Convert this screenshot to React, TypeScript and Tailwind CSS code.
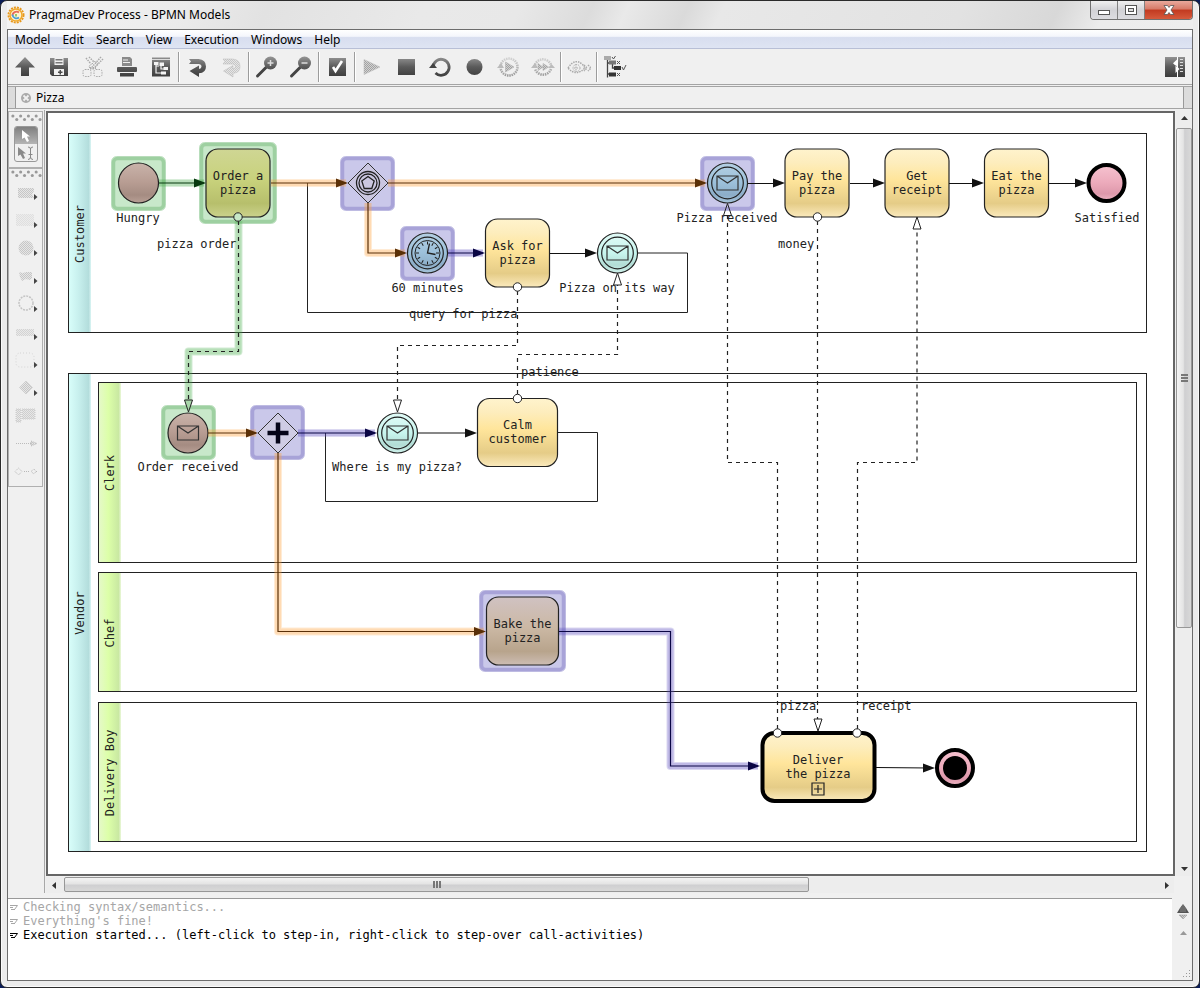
import React from "react";

const UI = "font-['Noto_Sans','Open_Sans',sans-serif]";
const MONO = "font-['DejaVu_Sans_Mono',monospace]";

/* ---------- toolbar ---------- */

const G = "url(#iconDark)";
const L = "url(#iconLight)";

const icons: Record<string, React.ReactNode> = {
  "Go up": <path fill={G} d="M12 2 22 12.500H16V21H8V12.500H2Z" />,
  Save: (
    <g>
      <path fill={G} d="M3 3H21V21H5L3 19Z" />
      <path fill="#f0f0f0" d="M7.500 3H16.500V10H7.500Z" />
      <path fill="#777" d="M8.500 4H15.500V5.500H8.500ZM8.500 7H15.500V8.500H8.500Z" />
      <path fill="#f0f0f0" d="M7 14H17V20H7Z" />
      <path fill={G} d="M12.500 15H14V16.500H15.500V18H14V19.500H12.500V18H11V16.500H12.500Z" />
    </g>
  ),
  Cut: (
    <g fill="none" stroke="#aaa" strokeDasharray="1.500 1">
      <path d="M5 3 10 9M8 2 13 7M20 2 11 12M22 4 14 12" strokeWidth="1.500" />
      <path d="M11 9 14 6 17 9 13 14H9L8 11Z" />
      <rect x="2" y="14.500" width="8" height="7" rx="2" />
      <rect x="13" y="14.500" width="8" height="7" rx="2" />
      <path d="M9 13H15" strokeWidth="2" />
    </g>
  ),
  Print: (
    <g fill={G}>
      <path d="M7 2H15L17 4V11H7Z" fill="#8a8a8a" />
      <path d="M8 5H13M8 7.500H15" stroke="#f0f0f0" strokeWidth="1" />
      <rect x="2" y="12" width="20" height="5" rx="1" />
      <rect x="5" y="18" width="14" height="3.500" />
    </g>
  ),
  Outline: (
    <g>
      <rect x="3" y="2.500" width="18" height="19" fill={G} />
      <path d="M3 4.500H21" stroke="#ddd" />
      <path d="M7 8V18H14M7 11H10M12 9V14H15" stroke="#f4f4f4" strokeWidth="1.200" fill="none" />
      <path fill="#f4f4f4" d="M5 7H9.500V10H5ZM10.500 7.500H15V11H10.500ZM14.500 12H19V15H14.500ZM12 16.500H17V19.500H12Z" />
    </g>
  ),
  Undo: (
    <path
      fill={G}
      d="M4 4H13.500Q21 4.500 21 11.500Q21 18 14 18.300V22L4.500 16 14 10.500V14Q16.500 13.800 16.500 11.500Q16.500 9 13.500 9H4L6 6.500Z"
    />
  ),
  Redo: (
    <path
      fill="url(#dots)"
      stroke="#bbb"
      strokeWidth=".5"
      d="M4 4H13.500Q21 4.500 21 11.500Q21 18 14 18.300V22L4.500 16 14 10.500V14Q16.500 13.800 16.500 11.500Q16.500 9 13.500 9H4L6 6.500Z"
    />
  ),
  "Zoom in": (
    <g>
      <path d="M2.500 21 11 12.500" stroke="#444" strokeWidth="3" strokeLinecap="round" />
      <circle cx="15.500" cy="8" r="6.500" fill={G} />
      <path d="M12.500 8H18.500M15.500 5V11" stroke="#ddd" strokeWidth="1.500" />
    </g>
  ),
  "Zoom out": (
    <g>
      <path d="M2.500 21 11 12.500" stroke="#444" strokeWidth="3" strokeLinecap="round" />
      <circle cx="15.500" cy="8" r="6.500" fill={G} />
      <path d="M12.500 8H18.500" stroke="#ddd" strokeWidth="1.500" />
    </g>
  ),
  Check: (
    <g>
      <rect x="4" y="3" width="17" height="18" fill={G} />
      <path d="M8 12 10.500 16 17 6" stroke="#fff" strokeWidth="2.600" fill="none" />
    </g>
  ),
  Run: <path d="M3 4.500 19 12 3 19.500Z" fill="url(#dotsDark)" stroke="#bbb" strokeWidth=".5" />,
  Stop: <rect x="3" y="4" width="17" height="16" fill={G} />,
  Restart: (
    <g>
      <path d="M4.600 12A8 8 0 1 1 7 18" stroke={G} strokeWidth="2.800" fill="none" transform="translate(-.5 0)" />
      <path d="M0 13 4 8 8 13Z" fill="#444" />
    </g>
  ),
  Record: <circle cx="11.500" cy="12" r="8" fill={G} />,
  "Step in": (
    <g>
      <circle cx="12" cy="12" r="8.500" fill="none" stroke={L} strokeWidth="2.500" strokeDasharray="1.500 .8" />
      <path d="M8.500 7 17 12 8.500 17Z" fill="url(#dotsDark)" stroke="#aaa" strokeWidth=".5" />
      <path d="M0 13 4 8 7 13Z" fill="#bbb" />
    </g>
  ),
  "Step over": (
    <g>
      <path d="M3.500 12A8.500 8.500 0 0 1 20 10M20 14A8.500 8.500 0 0 1 4 14" fill="none" stroke={L} strokeWidth="2.500" strokeDasharray="1.500 .8" />
      <path d="M7 8.500 12 12 7 15.500ZM12 8.500 17.500 12 12 15.500Z" fill="url(#dotsDark)" stroke="#aaa" strokeWidth=".5" />
      <path d="M0 13 4 8 7 13ZM17 13H24L20.500 9Z" fill="#bbb" />
    </g>
  ),
  Watch: (
    <g fill="none" stroke="#aaa" strokeDasharray="1.500 1">
      <path d="M1 13Q8 2 16 10L18 13Q9 22 1 13Z" strokeWidth="1.500" />
      <circle cx="9.500" cy="13" r="3.500" />
      <path d="M9 9V17M7 13H12" />
      <path d="M17 10 20 13 17 16M21 10 24 13 21 16" strokeWidth="1.500" />
    </g>
  ),
  Coverage: (
    <g>
      <path d="M4.500 5V22.500M5 8H8M9.500 9V13H12M5 19H7" stroke="#444" strokeWidth="1.300" fill="none" />
      <path fill="#aaa" d="M1 1H8V5H1Z" />
      <path fill="#777" d="M6 5.500H13V9.500H6Z" />
      <path fill="#333" d="M11 11H18V15H11ZM6 17.500H13V21.500H6Z" />
      <path d="M9 2 10.500 4 12.500 1M14 6 17 9M17 6 14 9M19 12 20.500 15 23 10M14 18 17 21M17 18 14 21" stroke="#555" fill="none" />
    </g>
  ),
  Panel: (
    <g>
      <rect x="2" y="2" width="20" height="20" fill={G} />
      <path d="M14.500 2V22" stroke="#fff" />
      <path d="M14 4.500V12L10 8.300ZM12.500 10V18L16.500 14Z" fill="#fff" />
      <path d="M17 4.500H20M17 7.500H20M17 10.500H20M17 13.500H20M17 16.500H20" stroke="#ddd" />
    </g>
  ),
};

function ToolButton({ name }: { name: string }) {
  return (
    <button type="button" aria-label={name} className="flex h-[34px] w-[34px] items-center justify-center">
      <svg viewBox="0 0 24 24" className="h-6 w-6">
        {icons[name]}
      </svg>
    </button>
  );
}

const toolGroups = [
  ["Go up", "Save", "Cut", "Print", "Outline"],
  ["Undo", "Redo"],
  ["Zoom in", "Zoom out"],
  ["Check"],
  ["Run", "Stop", "Restart", "Record", "Step in", "Step over"],
  ["Watch"],
  ["Coverage"],
];

function SharedDefs() {
  return (
    <svg className="absolute h-0 w-0" aria-hidden="true">
      <defs>
        <linearGradient id="iconDark" gradientUnits="userSpaceOnUse" x1="0" y1="2" x2="0" y2="22">
          <stop offset="0" stopColor="#929292" />
          <stop offset=".5" stopColor="#5a5a5a" />
          <stop offset="1" stopColor="#3c3c3c" />
        </linearGradient>
        <linearGradient id="iconLight" gradientUnits="userSpaceOnUse" x1="0" y1="2" x2="0" y2="22">
          <stop offset="0" stopColor="#d4d4d4" />
          <stop offset="1" stopColor="#999" />
        </linearGradient>
        <pattern id="dots" width="2" height="2" patternUnits="userSpaceOnUse">
          <rect width="2" height="2" fill="#e6e6e6" />
          <rect width="1" height="1" fill="#c6c6c6" />
          <rect x="1" y="1" width="1" height="1" fill="#c6c6c6" />
        </pattern>
        <pattern id="dotsDark" width="2" height="2" patternUnits="userSpaceOnUse">
          <rect width="2" height="2" fill="#d2d2d2" />
          <rect width="1" height="1" fill="#a2a2a2" />
          <rect x="1" y="1" width="1" height="1" fill="#a2a2a2" />
        </pattern>
      </defs>
    </svg>
  );
}

/* ---------- palette ---------- */

const paletteItems: { name: string; arrow: boolean; art: React.ReactNode }[] = [
  { name: "Pool", arrow: true, art: <path d="M4 8H20V11L18 14 20 18H4Z" fill="url(#dots)" /> },
  { name: "Lane", arrow: true, art: <path d="M2 6H20V18H2Z" fill="url(#dots)" opacity=".4" /> },
  { name: "Start event", arrow: true, art: <circle cx="12" cy="12" r="7.500" fill="url(#dots)" /> },
  { name: "Intermediate event", arrow: true, art: <path d="M5 8 9 9 12 8 18 8V14L16 16 12 15 8 17 6 13Z" fill="url(#dots)" /> },
  { name: "End event", arrow: true, art: <circle cx="12" cy="11" r="7" fill="none" stroke="#c4c4c4" strokeWidth="1.500" strokeDasharray="2 1" /> },
  { name: "Activity", arrow: true, art: <path d="M2 9H20V16H2Z" fill="url(#dots)" opacity=".7" /> },
  { name: "Sub-process", arrow: true, art: <rect x="2" y="5" width="18" height="14" rx="4" fill="none" stroke="#d4d4d4" strokeDasharray="1 2" /> },
  { name: "Gateway", arrow: true, art: <path d="M12 5 18.500 11.500 12 18 5.500 11.500Z" fill="url(#dots)" stroke="#c0c0c0" strokeWidth=".5" /> },
  { name: "Annotation", arrow: false, art: <path d="M2 5H7V18H2ZM8 5H21V15H8Z" fill="url(#dots)" opacity=".8" stroke="#c4c4c4" strokeDasharray="1 1" /> },
  { name: "Sequence flow", arrow: false, art: <path d="M2 11.500H18M17 9 23 11.500 17 14Z" stroke="#bbb" strokeDasharray="1 1" fill="url(#dots)" /> },
  {
    name: "Message flow",
    arrow: false,
    art: <path d="M1 11.500 4.500 8 8 11.500 4.500 15ZM10 11.500H16M17 11.500 20 9 22 11.500 20 14ZM22 11.500H24" stroke="#b8b8b8" strokeDasharray="1 1" fill="none" />,
  },
];

function Grip() {
  return (
    <svg className="h-[9px] w-full" viewBox="0 0 34 9" aria-hidden="true">
      {[0, 1, 2, 3].map((i) => (
        <g key={i} fill="#999">
          <circle cx={4 + i * 8} cy="3" r="1.600" />
          <circle cx={8 + i * 8} cy="6.500" r="1.600" />
        </g>
      ))}
    </svg>
  );
}

function Palette() {
  return (
    <aside className="flex w-[37px] shrink-0 flex-col border-r border-[#a8a8a8] pr-px pt-px">
      <div className="h-[57px] border border-[#b0b0b0] pt-px">
        <Grip />
        <div className="mx-auto mt-1 flex w-6 flex-col overflow-hidden rounded-[3px] border border-[#999]">
          <button type="button" aria-label="Select" className="flex h-[17px] items-center justify-center bg-linear-to-b from-[#808080] to-[#b5b5b5]">
            <svg viewBox="0 0 12 14" className="h-[14px] w-3">
              <path d="M2 1V10L4.500 8.500 7 13 9 12 7 7.500H10Z" fill="#fff" />
            </svg>
          </button>
          <button type="button" aria-label="Edit text" className="flex h-[17px] items-center justify-center">
            <svg viewBox="0 0 22 16" className="h-4 w-[22px]">
              <path d="M3 2V11L5.500 9.500 8 14 10 13 8 8.500H11Z" fill="#8a8a8a" />
              <path d="M13 2Q15.500 2 15.500 4Q15.500 2 18 2M15.500 3V13M13 14.500Q15.500 14.500 15.500 12Q15.500 14.500 18 14.500M13.500 9.500H17.500" stroke="#888" fill="none" />
            </svg>
          </button>
        </div>
      </div>
      <div className="border border-[#b0b0b0]">
        <Grip />
        {paletteItems.map((p) => (
          <button key={p.name} type="button" aria-label={p.name} className="flex h-7 w-full items-center pl-[5px]">
            <svg viewBox="0 0 24 24" className="h-6 w-6">
              {p.art}
              {p.arrow && <path d="M20 14 23.500 17 20 20Z" fill="#444" />}
            </svg>
          </button>
        ))}
      </div>
    </aside>
  );
}

/* ---------- diagram ---------- */

type Tone = "plain" | "green" | "orange" | "violet";

const flowTone: Record<Tone, { line: string; glow: string }> = {
  plain: { line: "#111", glow: "none" },
  green: { line: "#083a10", glow: "#4caf50" },
  orange: { line: "#5a3008", glow: "#ffa640" },
  violet: { line: "#0a0644", glow: "#5a4cc0" },
};

function Flow({ d, tip, tone = "plain" }: { d: string; tip?: [number, number]; tone?: Tone }) {
  const t = flowTone[tone];
  return (
    <g>
      {tone !== "plain" && (
        <>
          <path d={d} fill="none" stroke={t.glow} strokeOpacity=".22" strokeWidth="8" strokeLinejoin="round" />
          <path d={d} fill="none" stroke={t.glow} strokeOpacity=".22" strokeWidth="6" strokeLinejoin="round" />
        </>
      )}
      <path d={d} fill="none" stroke={t.line} strokeWidth="1.200" />
      {tip && <path d={`M${tip[0]} ${tip[1]}l-12-4.500v9Z`} fill={t.line} />}
    </g>
  );
}

function Message({ d, from, tip, up, tone }: { d: string; from: [number, number]; tip: [number, number]; up?: boolean; tone?: Tone }) {
  return (
    <g stroke="#222" fill="none">
      {tone && (
        <>
          <path d={d} stroke="#4caf50" strokeOpacity=".25" strokeWidth="8" strokeLinejoin="round" />
          <path d={d} stroke="#4caf50" strokeOpacity=".2" strokeWidth="6" strokeLinejoin="round" />
        </>
      )}
      <path d={d} strokeDasharray="4 4" strokeWidth="1.200" />
      <path d={`M${tip[0]} ${tip[1]}l-4 ${up ? 12 : -12}h8Z`} fill={tone ? "#a9d6aa" : "#fff"} fillOpacity={up ? 0 : 1} />
      <circle cx={from[0]} cy={from[1]} r="4.200" fill={tone ? "#c7e8c8" : "#fff"} />
    </g>
  );
}

function Halo({ x, y, w, h, tone }: { x: number; y: number; w: number; h: number; tone: "green" | "violet" }) {
  const fill = tone === "green" ? "#c8e8ca" : "#cac8ea";
  const edge = tone === "green" ? "#9ed0a1" : "#a8a3d8";
  return (
    <g>
      <rect x={x + 0.5} y={y + 0.5} width={w - 1} height={h - 1} rx="5" fill={fill} stroke={edge} strokeOpacity=".5" />
      <rect x={x + 2.5} y={y + 2.5} width={w - 5} height={h - 5} rx="4" fill="none" stroke={edge} strokeWidth="3.500" />
    </g>
  );
}

function Label({ x, y, lines, anchor = "middle" }: { x: number; y: number; lines: string[]; anchor?: "middle" | "start" }) {
  return (
    <text x={x} y={y} textAnchor={anchor} fill="#222">
      {lines.map((l, i) => (
        <tspan key={l} x={x} y={y + i * 14}>
          {l}
        </tspan>
      ))}
    </text>
  );
}

function Task({ x, y, w, h = 68, lines, fill = "url(#task)" }: { x: number; y: number; w: number; h?: number; lines: string[]; fill?: string }) {
  return (
    <g>
      <rect x={x} y={y} width={w} height={h} rx="12" fill={fill} stroke="#222" strokeWidth="1.200" />
      <Label x={x + w / 2} y={y + 30.5} lines={lines} />
    </g>
  );
}

function Envelope({ x, y }: { x: number; y: number }) {
  return <path d={`M${x - 10.5} ${y - 7}h21v14h-21Zl10.500 7 10.500-7`} fill="none" stroke="#333" strokeWidth="1.200" />;
}

function Event({ x, y, fill, double, children }: { x: number; y: number; fill: string; double?: boolean; children?: React.ReactNode }) {
  return (
    <g>
      <circle cx={x} cy={y} r="20" fill={fill} stroke="#222" strokeWidth="1.200" />
      {double && <circle cx={x} cy={y} r="15.800" fill="none" stroke="#222" strokeWidth="1.200" />}
      {children}
    </g>
  );
}

function Band({ x, y, h, fill, title, cy }: { x: number; y: number; h: number; fill: string; title: string; cy: number }) {
  return (
    <g>
      <rect x={x} y={y} width="23" height={h} fill={fill} />
      <text transform={`translate(${x + 15.5} ${cy}) rotate(-90)`} textAnchor="middle" fill="#222">
        {title}
      </text>
    </g>
  );
}

function Grad({ id, stops, across }: { id: string; stops: [number, string][]; across?: boolean }) {
  return (
    <linearGradient id={id} x1="0" y1="0" x2={across ? 1 : 0} y2={across ? 0 : 1}>
      {stops.map(([o, c]) => (
        <stop key={o} offset={o} stopColor={c} />
      ))}
    </linearGradient>
  );
}

function Diagram() {
  const ticks = Array.from({ length: 12 }, (_, i) => i * 30);
  return (
    <svg viewBox="48 113 1125 761" width="1125" height="761" className={`block shrink-0 text-[12px] ${MONO}`} role="img" aria-label="Pizza process">
      <defs>
        <Grad id="task" stops={[[0, "#fff3cd"], [0.2, "#fdedbd"], [0.45, "#ffe59b"], [0.8, "#e5cc87"], [1, "#fbeabd"]]} />
        <Grad id="taskGreen" stops={[[0, "#cfd694"], [0.45, "#c8d27c"], [0.8, "#b7bf6c"], [1, "#cbd28c"]]} />
        <Grad id="taskViolet" stops={[[0, "#d0c2c2"], [0.45, "#cbb8a4"], [0.8, "#b8a48c"], [1, "#cdbdb4"]]} />
        <Grad id="brown" stops={[[0, "#c9b3aa"], [0.5, "#b79c92"], [0.8, "#a58c82"], [1, "#b8a096"]]} />
        <Grad id="teal" stops={[[0, "#e0faf6"], [0.5, "#c8f5ee"], [0.8, "#b2dcd5"], [1, "#d0f2ec"]]} />
        <Grad id="blue" stops={[[0, "#b3cfe2"], [0.5, "#9cc0da"], [0.8, "#8cadc8"], [1, "#a6c4da"]]} />
        <Grad id="pink" stops={[[0, "#f6c3d0"], [0.5, "#ecaabb"], [0.8, "#dd98ab"], [1, "#efb9c6"]]} />
        <Grad id="pool" across stops={[[0, "#dafffb"], [0.45, "#c8f0ee"], [0.9, "#b3dddc"], [1, "#dcf6f5"]]} />
        <Grad id="lane" across stops={[[0, "#e6f8cc"], [0.45, "#dcffa8"], [0.9, "#c9e8a2"], [1, "#ecf8dc"]]} />
      </defs>

      <Band x={68} y={133} h={199} fill="url(#pool)" title="Customer" cy={234} />
      <Band x={68} y={373} h={478} fill="url(#pool)" title="Vendor" cy={613} />
      <Band x={98} y={383} h={179} fill="url(#lane)" title="Clerk" cy={473} />
      <Band x={98} y={573} h={119} fill="url(#lane)" title="Chef" cy={633} />
      <Band x={98} y={702} h={140} fill="url(#lane)" title="Delivery Boy" cy={773} />
      <g fill="none" stroke="#222">
        <rect x="68.500" y="133.500" width="1078" height="199" />
        <rect x="68.500" y="373.500" width="1078" height="478" />
        <rect x="98.500" y="382.500" width="1038" height="180" />
        <rect x="98.500" y="572.500" width="1038" height="119" />
        <rect x="98.500" y="702.500" width="1038" height="139" />
      </g>

      <Halo x={111} y={156} w={55} h={55} tone="green" />
      <Halo x={199} y={142} w={78} h={82} tone="green" />
      <Halo x={340} y={156} w={55} h={55} tone="violet" />
      <Halo x={400} y={226} w={55} h={55} tone="violet" />
      <Halo x={700} y={156} w={55} h={55} tone="violet" />
      <Halo x={161} y={405} w={55} h={55} tone="green" />
      <Halo x={250} y={405} w={55} h={55} tone="violet" />
      <Halo x={479} y={590} w={87} h={82} tone="violet" />

      <path d="M307.500 183V312.500H687.500V253H637M325.500 433V501.500H597.500V432.500H558" fill="none" stroke="#222" />

      <Event x={138.5} y={183} fill="url(#brown)" />
      <Task x={206} y={149} w={64} lines={["Order a", "pizza"]} fill="url(#taskGreen)" />
      <path d="M368 163 388 183 368 203 348 183Z" fill="#cac6e0" stroke="#333" />
      <g fill="none" stroke="#222" strokeWidth="1.300">
        <circle cx="368" cy="183" r="11.500" />
        <circle cx="368" cy="183" r="9" />
        <path d="M368 176.500 374.200 181 371.800 188.500H364.200L361.800 181Z" />
      </g>
      <Event x={427.5} y={253} fill="url(#blue)" double>
        <g fill="none" stroke="#222">
          <circle cx="427.500" cy="253" r="12.500" />
          {ticks.map((a) => (
            <path key={a} d="M427.500 241.500V244.500" transform={`rotate(${a} 427.500 253)`} />
          ))}
          <path d="M429.500 243.500 427.500 253 435.500 254.500" strokeWidth="1.300" />
        </g>
      </Event>
      <Task x={485.5} y={219} w={64} lines={["Ask for", "pizza"]} />
      <Event x={617.5} y={253} fill="url(#teal)" double>
        <Envelope x={617.5} y={253} />
      </Event>
      <Event x={727.5} y={183} fill="url(#blue)" double>
        <Envelope x={727.5} y={183} />
      </Event>
      <Task x={785} y={149} w={64} lines={["Pay the", "pizza"]} />
      <Task x={885} y={149} w={64} lines={["Get", "receipt"]} />
      <Task x={984.5} y={149} w={64} lines={["Eat the", "pizza"]} />
      <circle cx="1106.500" cy="183" r="18" fill="url(#pink)" stroke="#000" strokeWidth="4" />

      <Event x={188} y={433} fill="url(#brown)">
        <Envelope x={188} y={433} />
      </Event>
      <path d="M278 413 298 433 278 453 258 433Z" fill="#cfcce4" stroke="#333" />
      <path d="M278 422.500V443.500M267.500 433H288.500" stroke="#050418" strokeWidth="4.500" />
      <Event x={397.5} y={433} fill="url(#teal)" double>
        <Envelope x={397.5} y={433} />
      </Event>
      <Task x={477.5} y={398.5} w={80} lines={["Calm", "customer"]} />
      <Task x={486.5} y={597} w={72} lines={["Bake the", "pizza"]} fill="url(#taskViolet)" />

      <rect x="762.500" y="733" width="112" height="68" rx="12" fill="url(#task)" stroke="#000" strokeWidth="4" />
      <Label x={818} y={763.5} lines={["Deliver", "the pizza"]} />
      <path d="M812 783H824V795H812ZM818 785V793M814 789H822" fill="none" stroke="#222" strokeWidth="1.200" />
      <circle cx="955" cy="768" r="18" fill="url(#pink)" stroke="#000" strokeWidth="4" />
      <circle cx="955" cy="768" r="12" fill="#000" />

      <Flow d="M159 183H204" tip={[206, 183]} tone="green" />
      <Flow d="M271 183H346" tip={[348, 183]} tone="orange" />
      <Flow d="M388 183H705" tip={[707, 183]} tone="orange" />
      <Flow d="M368 203V253H405" tip={[407, 253]} tone="orange" />
      <Flow d="M448 253H483" tip={[485, 253]} tone="violet" />
      <Flow d="M550 253.500H590" tip={[597, 253]} />
      <Flow d="M748 183.500H780" tip={[785, 183]} />
      <Flow d="M850 183.500H880" tip={[885, 183]} />
      <Flow d="M949 183.500H980" tip={[984, 183]} />
      <Flow d="M1049 183.500H1080" tip={[1087, 183]} />
      <Flow d="M208 433H256" tip={[258, 433]} tone="orange" />
      <Flow d="M298 433H375" tip={[377, 433]} tone="violet" />
      <Flow d="M418 433H470" tip={[477, 433]} />
      <Flow d="M278 453V631.500H484" tip={[486, 631.5]} tone="orange" />
      <Flow d="M559 631.500H670.500V766H758" tip={[760, 766]} tone="violet" />
      <Flow d="M876 767.500 930 768" tip={[935, 768]} />

      <g>
        <Label x={138} y={221.5} lines={["Hungry"]} />
        <Label x={157} y={247.5} lines={["pizza order"]} anchor="start" />
        <Label x={427.5} y={291.5} lines={["60 minutes"]} />
        <Label x={617} y={291.5} lines={["Pizza on its way"]} />
        <Label x={409} y={317.5} lines={["query for pizza"]} anchor="start" />
        <Label x={521} y={375.5} lines={["patience"]} anchor="start" />
        <Label x={727} y={221.5} lines={["Pizza received"]} />
        <Label x={778} y={247.5} lines={["money"]} anchor="start" />
        <Label x={1107} y={221.5} lines={["Satisfied"]} />
        <Label x={188} y={471} lines={["Order received"]} />
        <Label x={397} y={471} lines={["Where is my pizza?"]} />
        <Label x={780} y={709.5} lines={["pizza"]} anchor="start" />
        <Label x={861} y={709.5} lines={["receipt"]} anchor="start" />
      </g>

      <Message d="M238.500 221V351.500H188.500V400" from={[238, 217]} tip={[188.5, 412]} tone="green" />
      <Message d="M517.500 291V345.500H397.500V400" from={[517.5, 287]} tip={[397.5, 412]} />
      <Message d="M517.500 394V354.500H617.500V285" from={[517.5, 398.5]} tip={[617.5, 273]} up />
      <Message d="M777.500 729V462.500H727.500V215" from={[777.5, 733]} tip={[727.5, 203.500]} up />
      <Message d="M817.500 221V720" from={[817.5, 217]} tip={[818, 731]} />
      <Message d="M857.500 729V462.500H917V229" from={[857, 733]} tip={[917, 217]} up />
    </svg>
  );
}

/* ---------- scroll bars and log ---------- */

function Arrow({ dir, label, faint }: { dir: "up" | "down" | "left" | "right"; label: string; faint?: boolean }) {
  const d = { up: "M1 6 4.500 2 8 6Z", down: "M1 3 4.500 7 8 3Z", left: "M6 1 2 4.500 6 8Z", right: "M3 1 7 4.500 3 8Z" }[dir];
  return (
    <button type="button" aria-label={label} className="flex h-4 w-4 shrink-0 items-center justify-center">
      <svg viewBox="0 0 9 9" className="h-[9px] w-[9px]">
        <path d={d} fill={faint ? "#999" : "#333"} />
      </svg>
    </button>
  );
}

const log = [
  { text: "Checking syntax/semantics...", old: true },
  { text: "Everything's fine!", old: true },
  { text: "Execution started... (left-click to step-in, right-click to step-over call-activities)", old: false },
];

const menus = ["Model", "Edit", "Search", "View", "Execution", "Windows", "Help"];

export default function App() {
  return (
    <div className={`flex min-h-screen flex-col bg-[#0a1c56] text-[12px] text-black ${UI}`}>
      <SharedDefs />
      <div className="flex min-w-0 flex-1 flex-col overflow-hidden rounded-[7px] border border-[#2b2b2b] bg-[#ebebeb] px-[6px] pb-[6px] shadow-[inset_0_0_0_1px_#fafafa]">
        <header className="flex h-7 items-start bg-[linear-gradient(115deg,#f4f4f4_0%,#ebebeb_15%,#e2e2e2_22%,#e9e9e9_35%,#e8e8e8_43%,#dcdcdc_49%,#e0e0e0_50%,#e9e9e9_52%,#dadada_57%,#e8e8e8_60%,#e2e2e2_80%,#d8d8d8_88%,#ececec_92%,#ededed_100%)]">
          <svg viewBox="0 0 18 18" className="mt-[5px] h-[18px] w-[18px]" aria-hidden="true">
            <circle cx="9" cy="9" r="7.500" fill="none" stroke="#e8981c" strokeWidth="2" strokeDasharray="2 1" />
            <circle cx="9" cy="9" r="6" fill="#fff3d0" stroke="#f0a92c" strokeWidth="1.500" />
            <path d="M12 6.500A4 4 0 0 0 5.500 10" fill="none" stroke="#e86a5a" strokeWidth="1.800" />
            <path d="M5.500 8.500A4 4 0 0 0 12 11.500" fill="none" stroke="#4a9ed8" strokeWidth="1.800" />
            <path d="M9 8V10.500" stroke="#78b848" strokeWidth="1.500" />
          </svg>
          <h1 className="ml-1 pt-[5px] leading-[18px]">PragmaDev Process - BPMN Models</h1>
          <div className="ml-auto flex h-[19px] overflow-hidden rounded-b-[4px] border border-t-0 border-[#707070]">
            <button type="button" aria-label="Minimize" className="flex w-[27px] items-center justify-center border-r border-[#808080] bg-linear-to-b from-[#f0f0f0] via-[#d2d2d6] to-[#dcdce0]">
              <span className="mt-1 h-[5px] w-3 border border-[#555] bg-white" />
            </button>
            <button type="button" aria-label="Maximize" className="flex w-[27px] items-center justify-center border-r border-[#808080] bg-linear-to-b from-[#f0f0f0] via-[#d2d2d6] to-[#dcdce0]">
              <span className="flex h-[10px] w-3 items-center justify-center border border-[#555] bg-white">
                <span className="h-1 w-[6px] border border-[#555] bg-[#ddd]" />
              </span>
            </button>
            <button type="button" aria-label="Close" className="flex w-[47px] items-center justify-center bg-[linear-gradient(#e9a99c_0%,#d67a68_45%,#c23a20_50%,#d65a3c_100%)]">
              <svg viewBox="0 0 12 10" className="h-[10px] w-3">
                <path d="M1 .5H4.500L6 2.500 7.500 .5H11L8 5 11 9.500H7.500L6 7.500 4.500 9.500H1L4 5Z" fill="#fff" stroke="#555" strokeWidth=".8" />
              </svg>
            </button>
          </div>
        </header>

        <div className="flex min-h-0 flex-1 flex-col border border-[#6c6c6c] bg-[#f0f0f0]">
          <nav className="flex h-[19px] items-end border-b border-[#b8bfd6] bg-[linear-gradient(#fff_0%,#f4f6fc_35%,#d8deef_42%,#dee4f3_100%)] pl-px">
            {menus.map((m) => (
              <button key={m} type="button" className="px-[6px] leading-4">
                {m}
              </button>
            ))}
          </nav>

          <div role="toolbar" className="flex h-[36px] items-center border-b border-[#a4a4a4]">
            {toolGroups.map((g, i) => (
              <React.Fragment key={g[0]}>
                {i > 0 && <span className="h-[30px] w-[2px] border-l border-[#9c9c9c] bg-white" />}
                {g.map((n) => (
                  <ToolButton key={n} name={n} />
                ))}
              </React.Fragment>
            ))}
            <div className="ml-auto">
              <ToolButton name="Panel" />
            </div>
          </div>

          <div className="mt-px flex h-[23px] items-stretch border-y border-[#a4a4a4]">
            <span className="w-2 border-r border-[#999] bg-[#dcdcdc]" />
            <div className="flex items-center gap-1 pl-1">
              <button type="button" aria-label="Close tab" className="flex">
                <svg viewBox="0 0 12 12" className="h-3 w-3">
                  <circle cx="6" cy="6" r="5" fill="#aaa" />
                  <path d="M3.500 3.500 8.500 8.500M8.500 3.500 3.500 8.500" stroke="#f0f0f0" strokeWidth="1.800" />
                </svg>
              </button>
              <span>Pizza</span>
            </div>
            <span className="ml-auto w-[9px] border-l border-[#999] bg-[#dcdcdc]" />
          </div>

          <div className="flex min-h-0 flex-1 pt-px">
            <Palette />
            <div className="ml-px flex min-w-0 flex-1 flex-col">
              <div className="flex flex-1">
                <main className="mt-px min-w-0 flex-1 overflow-hidden border-2 border-[#666] bg-white">
                  <Diagram />
                </main>
                <div className="ml-px flex w-4 shrink-0 flex-col bg-[#ededed]">
                  <Arrow dir="up" label="Scroll up" />
                  <div className="flex flex-1 flex-col">
                    <div className="mt-[2px] flex h-[500px] flex-col items-center justify-center gap-px rounded-[2px] border border-[#979797] bg-[linear-gradient(90deg,#f4f4f4,#e4e4e4_45%,#cfcfd1_55%,#d8d8d8)]">
                      <span className="h-[2px] w-[7px] bg-[#777]" />
                      <span className="h-[2px] w-[7px] bg-[#777]" />
                      <span className="h-[2px] w-[7px] bg-[#777]" />
                    </div>
                  </div>
                  <Arrow dir="down" label="Scroll down" />
                </div>
              </div>
              <div className="mt-px mr-[18px] flex h-4 items-start bg-[#ededed]">
                <Arrow dir="left" label="Scroll left" />
                <div className="flex flex-1">
                  <div className="ml-[2px] flex h-[15px] w-[68%] items-center justify-center gap-px rounded-[2px] border border-[#979797] bg-[linear-gradient(#f4f4f4,#e4e4e4_45%,#cfcfd1_55%,#d8d8d8)]">
                    <span className="h-[7px] w-[2px] bg-[#777]" />
                    <span className="h-[7px] w-[2px] bg-[#777]" />
                    <span className="h-[7px] w-[2px] bg-[#777]" />
                  </div>
                </div>
                <Arrow dir="right" label="Scroll right" />
              </div>
            </div>
          </div>

          <div className="mt-[5px] flex h-[82px] shrink-0">
            <ol className={`min-w-0 flex-1 border-t border-[#999] bg-white pt-px leading-[14px] ${MONO}`}>
              {log.map((l) => (
                <li key={l.text} className={`flex items-center gap-1 pl-[2px] ${l.old ? "text-[#a6a6a6]" : "text-black"}`}>
                  <svg viewBox="0 0 9 9" className="h-[9px] w-[9px]" aria-hidden="true">
                    <path d="M0 2.500H7.500L4.500 6.500M0 4.500H3M1 6.500H5" stroke="currentColor" fill="none" />
                  </svg>
                  <span>{l.text}</span>
                </li>
              ))}
            </ol>
            <div className="ml-[2px] flex w-[18px] flex-col items-center">
              <svg viewBox="0 0 14 18" className="mt-[5px] h-[18px] w-[14px]" aria-hidden="true">
                <path d="M7 1 10 5 13 10H1L4 5Z" fill="#555" />
                <path d="M7 2V9M5 4V9M9 4V9" stroke="#999" strokeWidth=".7" />
                <path d="M3 12H11L7 16Z" fill="url(#dotsDark)" stroke="#999" strokeWidth=".5" />
              </svg>
              <div className="mt-[4px]">
                <Arrow dir="up" label="Scroll log up" faint />
              </div>
              <svg viewBox="0 0 10 10" className="mb-px ml-auto mt-auto h-[10px] w-[10px]" aria-hidden="true">
                <path d="M7 1h1v1h-1ZM4 4h1v1h-1ZM7 4h1v1h-1ZM1 7h1v1h-1ZM4 7h1v1h-1ZM7 7h1v1h-1Z" fill="#999" />
              </svg>
            </div>
          </div>
        </div>
      </div>
    </div>
  );
}
